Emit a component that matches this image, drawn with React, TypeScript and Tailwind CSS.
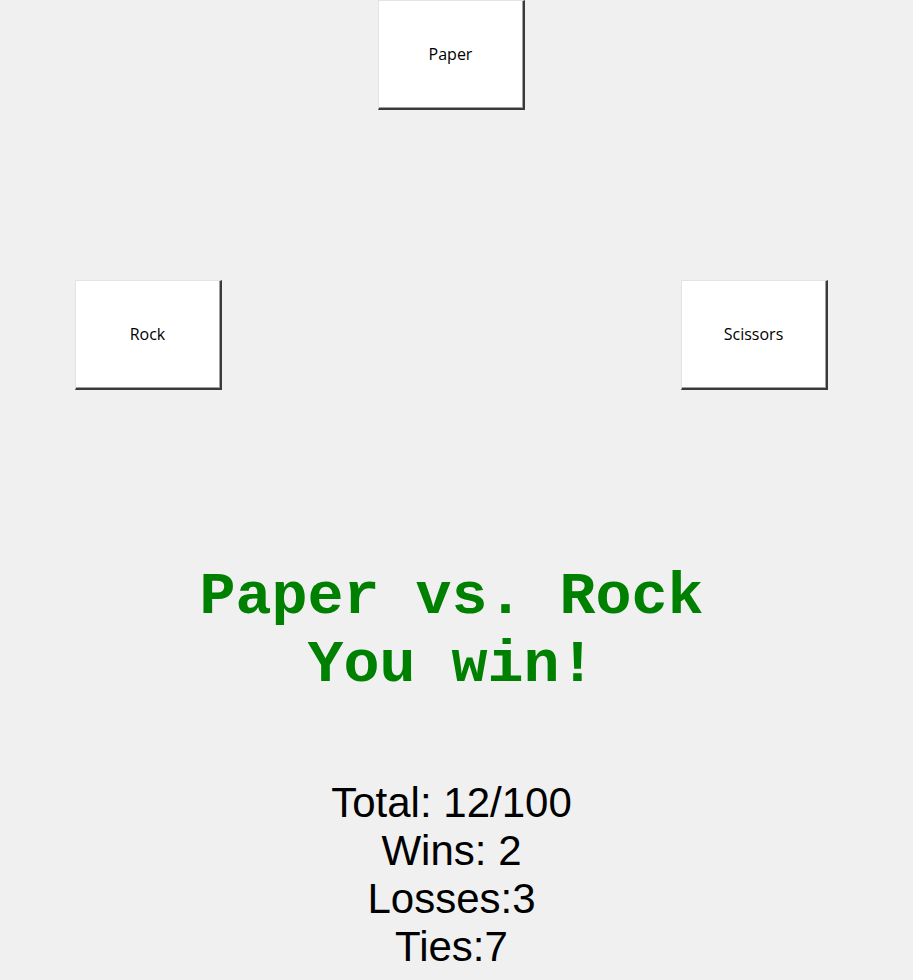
import React from "react";

function TkButton({ label }: { label: string }) {
  return (
    <div className="w-[147px] h-[110px] border-t border-l border-t-[#e3e3e3] border-l-[#e3e3e3] border-r-2 border-b-2 border-r-[#3a3a3a] border-b-[#3a3a3a] bg-white flex">
      <div className="flex-1 border-r border-b border-r-[#a0a0a0] border-b-[#a0a0a0] flex items-center justify-center text-[16px] text-black" style={{ fontFamily: '"Open Sans", "Noto Sans", sans-serif' }}>
        {label}
      </div>
    </div>
  );
}

export default function App() {
  return (
    <div className="w-[913px] h-[980px] bg-[#f0f0f0] overflow-hidden">
      <div className="w-[903px] flex flex-col items-center">
        <TkButton label="Paper" />
        <div className="w-full flex justify-between pl-[75px] pr-[75px] mt-[170px]">
          <TkButton label="Rock" />
          <TkButton label="Scissors" />
        </div>
        <div
          className="mt-[173px] text-center font-bold text-[60px] leading-[68px] text-[#008000] whitespace-pre"
          style={{ fontFamily: '"Liberation Mono", "Courier New", monospace' }}
        >
          <div>Paper vs. Rock</div>
          <div>You win!</div>
        </div>
        <div
          className="mt-[80px] text-center text-[42px] leading-[48px] text-black"
          style={{ fontFamily: '"Liberation Sans", Arial, sans-serif' }}
        >
          <div>Total: 12/100</div>
          <div>Wins: 2</div>
          <div>Losses:3</div>
          <div>Ties:7</div>
        </div>
      </div>
    </div>
  );
}
